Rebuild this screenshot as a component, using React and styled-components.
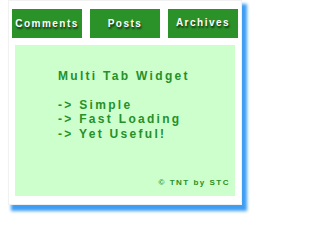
import React, { useState } from 'react';
import styled, { createGlobalStyle } from 'styled-components';

const GlobalStyle = createGlobalStyle`
  body {
    margin: 0;
    background: #ffffff;
    font-family: "Liberation Sans", Arial, sans-serif;
  }
`;

const Page = styled.div`
  width: 251px;
  height: 216px;
  padding-left: 8px;
  box-sizing: border-box;
  overflow: visible;
`;

const Card = styled.div`
  box-sizing: border-box;
  width: 234px;
  height: 205px;
  background: #ffffff;
  border: 1px solid #f1f1f1;
  box-shadow: 4px 5px 3px 1px #3f9ef4;
  display: flex;
  flex-direction: column;
`;

const TabRow = styled.div`
  display: flex;
  justify-content: space-between;
  padding: 8px 3px 0 3px;
`;

const Tab = styled.button`
  width: 70px;
  height: 29px;
  border: none;
  padding: 0 0 ${(p) => (p.$lift ? 2 : 0)}px 0;
  margin: 0;
  background: #2b922a;
  color: #ffffff;
  font-family: "Liberation Sans", Arial, sans-serif;
  font-weight: bold;
  font-size: 10px;
  letter-spacing: 1.5px;
  text-shadow: 1px 2px 2px rgba(0, 0, 0, 0.7);
  cursor: pointer;
`;

const Panel = styled.div`
  flex: 1;
  margin: 7px 6px 8px 6px;
  background: #ccffcc;
  display: flex;
  flex-direction: column;
  justify-content: space-between;
  padding: 24px 6px 9px 43px;
  color: #26902a;
`;

const Body = styled.div`
  font-size: 12px;
  font-weight: bold;
  letter-spacing: 2.3px;
  line-height: 14.4px;
`;

const Line = styled.div`
  white-space: pre;
  min-height: 14.4px;
`;

const Footer = styled.div`
  align-self: flex-end;
  font-size: 8px;
  font-weight: bold;
  letter-spacing: 1.5px;
  margin-right: -1px;
`;

const lines = ['Multi Tab Widget', '', '-> Simple', '-> Fast Loading', '-> Yet Useful!'];

const tabs = [
  { name: 'Comments', lines },
  { name: 'Posts', lines },
  { name: 'Archives', lines },
];

export default function App() {
  const [active, setActive] = useState(0);

  return (
    <Page>
      <GlobalStyle />
      <Card>
        <TabRow>
          {tabs.map((t, i) => (
            <Tab key={t.name} $lift={i === 2} onClick={() => setActive(i)}>
              {t.name}
            </Tab>
          ))}
        </TabRow>
        <Panel>
          <Body>
            {tabs[active].lines.map((l, i) => (
              <Line key={i}>{l}</Line>
            ))}
          </Body>
          <Footer>© TNT by STC</Footer>
        </Panel>
      </Card>
    </Page>
  );
}
